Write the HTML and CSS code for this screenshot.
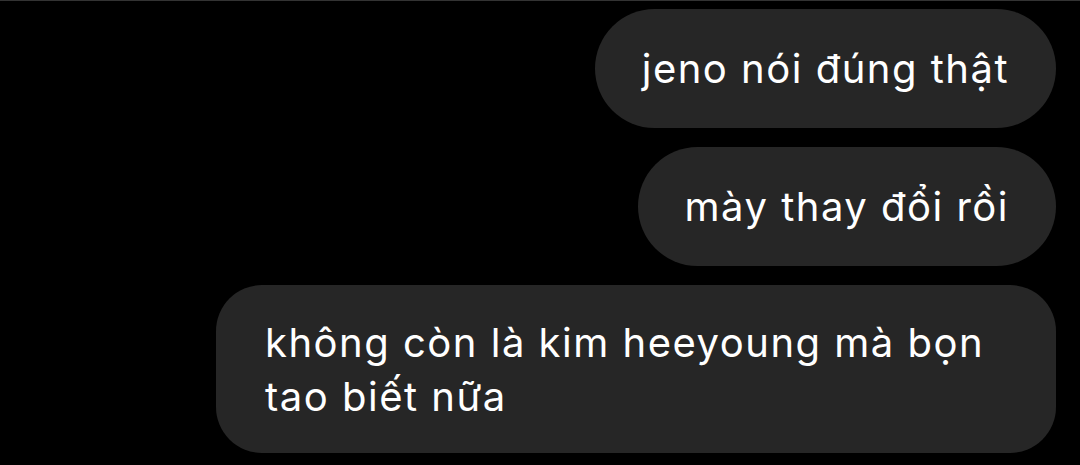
FILE: index.html
```html
<!DOCTYPE html>
<html lang="vi">
<head>
<meta charset="utf-8">
<link rel="stylesheet" href="styles.css">
</head>
<body>
<div class="chat">
  <div class="bubble pill">jeno nói đúng thật</div>
  <div class="bubble pill">mày thay đổi rồi</div>
  <div class="bubble multi">không còn là kim heeyoung mà bọn tao biết nữa</div>
</div>
</body>
</html>
```
FILE: styles.css
```css
html, body {
  margin: 0;
  padding: 0;
  background: #000;
}
body {
  width: 1080px;
  height: 465px;
  overflow: hidden;
  border-top: 1px solid #333;
  box-sizing: border-box;
  font-family: Inter, "Noto Sans", sans-serif;
}
.chat {
  display: flex;
  flex-direction: column;
  align-items: flex-end;
  gap: 19px;
  padding: 8px 24px 0 0;
}
.bubble {
  background: #262626;
  color: #fff;
  font-size: 40px;
  line-height: 55px;
  letter-spacing: 1.5px;
  box-sizing: border-box;
  max-width: 840px;
}
.pill {
  padding: 32px 47px 32px 47px;
  border-radius: 60px;
}
.multi {
  padding: 31px 49px 29px 49px;
  line-height: 54px;
  border-radius: 46px;
  width: 840px;
}
```
